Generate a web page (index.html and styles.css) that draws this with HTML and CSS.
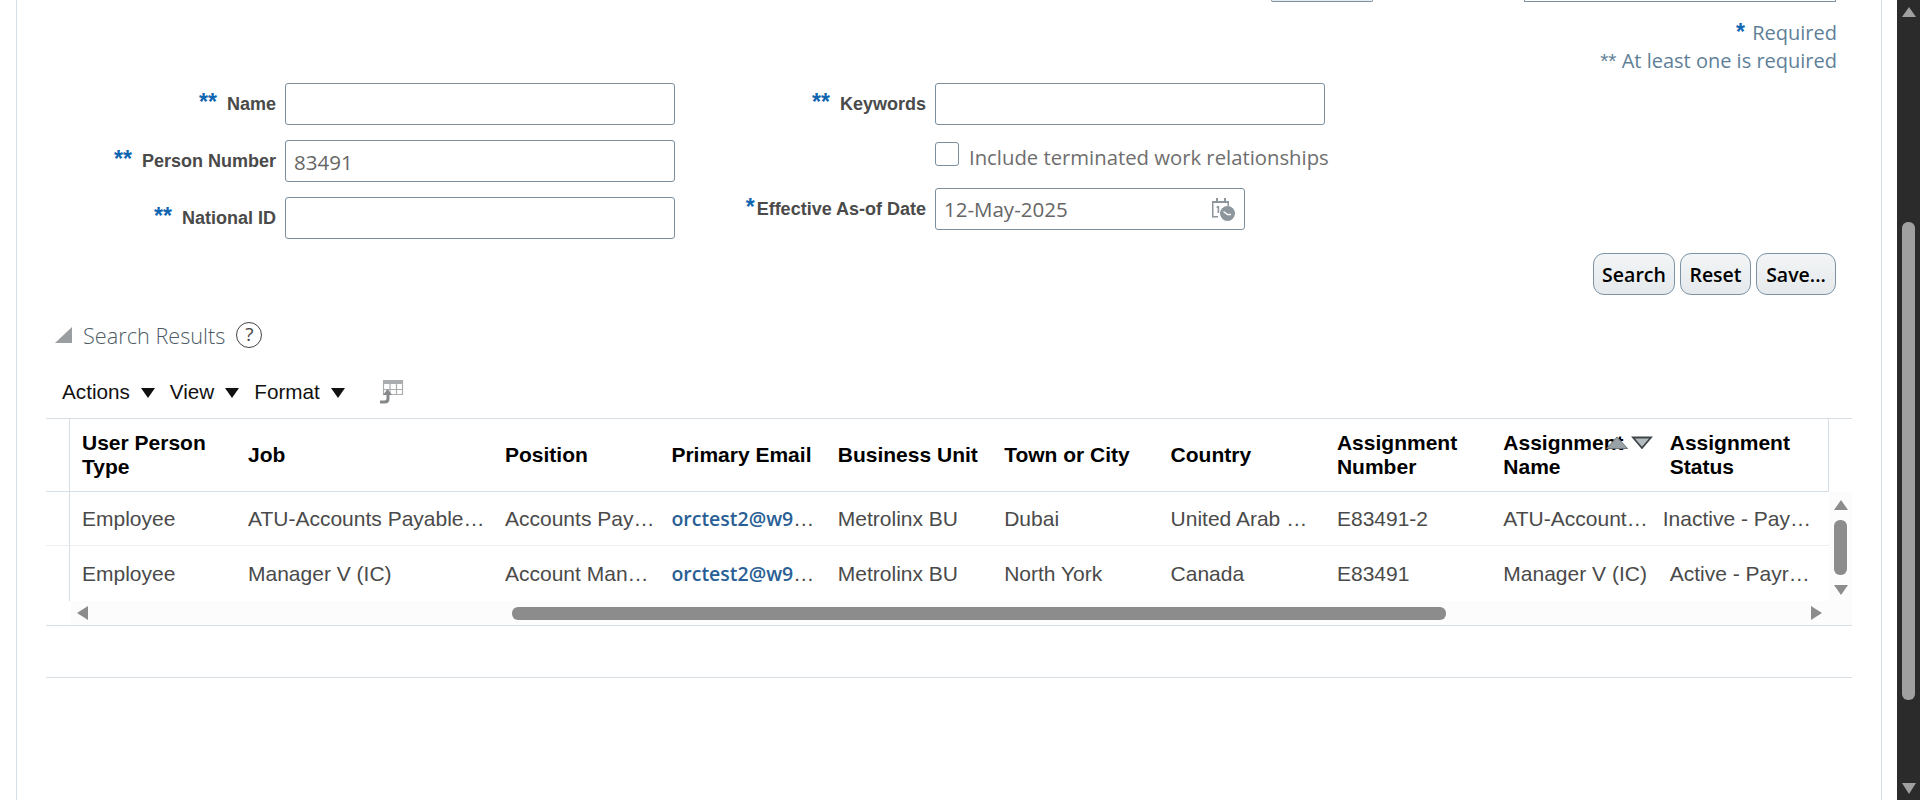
FILE: index.html
```html
<!DOCTYPE html>
<html>
	<head>
		<meta charset="UTF-8">
		<title>Person Management</title>
		<link rel="stylesheet" href="styles.css">
	</head>
	<body>
		<div id="page">
			<div id="panel">
				<!-- cut off controls at the top of the scrolled page -->
				<div class="stubs">
					<div class="stub-btn"></div>
					<div class="stub-input"></div>
				</div>

				<div class="legend">
					<div><span class="star star-req">*</span> Required</div>
					<div><span class="stars-light">**</span> At least one is required</div>
				</div>

				<div class="form">
					<div class="col col-left">
						<div class="field">
							<label><span class="star star-gap">**</span>Name</label>
							<div class="input"></div>
						</div>
						<div class="field">
							<label><span class="star star-gap">**</span>Person Number</label>
							<div class="input">83491</div>
						</div>
						<div class="field">
							<label><span class="star star-gap">**</span>National ID</label>
							<div class="input"></div>
						</div>
					</div>
					<div class="col col-right">
						<div class="field">
							<label><span class="star star-gap">**</span>Keywords</label>
							<div class="input"></div>
						</div>
						<div class="check-row">
							<span class="check"></span>
							<span class="check-text">Include terminated work relationships</span>
						</div>
						<div class="field">
							<label><span class="star star-raised">*</span>Effective As-of Date</label>
							<div class="input input-date">
								<span>12-May-2025</span>
								<svg width="24" height="24" viewBox="0 0 24 24">
									<path d="M1 4h4V1h2v3h6V1h2v3h3v5h-1.500V6H2.500v13H7v1.500H1z" fill="#8c969c"/>
									<path d="M6 9h2.200v7H6.600v-5.200H5.200z" fill="#8c969c"/>
									<circle cx="16.500" cy="16.500" r="7.500" fill="#8c969c"/>
									<path d="M12.500 14.500l4 3h3.500" fill="none" stroke="#fff" stroke-width="1.300"/>
								</svg>
							</div>
						</div>
					</div>
				</div>

				<div class="actions-row">
					<button class="btn btn-search">Search</button>
					<button class="btn btn-reset">Reset</button>
					<button class="btn btn-save">Save...</button>
				</div>

				<div class="section-head">
					<svg class="disclose" width="17" height="16" viewBox="0 0 17 16"><path d="M17 0v16H0z" fill="#9a9ea1"/></svg>
					<h2>Search Results</h2>
					<span class="help">?</span>
				</div>

				<div class="toolbar">
					<span class="menu">Actions<i class="caret"></i></span>
					<span class="menu">View<i class="caret"></i></span>
					<span class="menu">Format<i class="caret"></i></span>
					<svg class="export" width="24" height="24" viewBox="0 0 24 24">
						<path d="M3 0h20v4H3z" fill="#a9adb0"/>
						<path d="M3.500 0v15M10 0v15M16.500 0v15M22.500 0v15M3 9.500h20M3 14.500h20" fill="none" stroke="#a9adb0" stroke-width="1.200"/>
						<path d="M7.500 9l4.500 6H9.500v3.500Q9.500 23.500 5 23.500H0v-3h4.500q2 0 2-2V15H3z" fill="#85898c"/>
					</svg>
				</div>

				<div class="results">
					<div class="grid-area">
						<div class="grid">
							<div class="row row-head">
								<div class="gutter"></div>
								<div class="cell first">User Person Type</div>
								<div class="cell">Job</div>
								<div class="cell">Position</div>
								<div class="cell">Primary Email</div>
								<div class="cell">Business Unit</div>
								<div class="cell">Town or City</div>
								<div class="cell">Country</div>
								<div class="cell">Assignment Number</div>
								<div class="cell sorted">
									Assignment Name
									<span class="sort">
										<svg width="22" height="13" viewBox="0 0 22 13"><path d="M11 1l10.500 11.500H.5z" fill="#98a1a6" stroke="#6a7378"/></svg>
										<svg width="22" height="13" viewBox="0 0 22 13"><path d="M2 1.500h18L11 12z" fill="#b4bbbf" stroke="#3f4549" stroke-width="1.800"/></svg>
									</span>
								</div>
								<div class="cell">Assignment Status</div>
							</div>
							<div class="row row-data">
								<div class="gutter"></div>
								<div class="cell first">Employee</div>
								<div class="cell">ATU-Accounts Payable Manager</div>
								<div class="cell cell-pos">Accounts Payable</div>
								<div class="cell"><a class="mail">orctest2@w9mail.com</a></div>
								<div class="cell">Metrolinx BU</div>
								<div class="cell">Dubai</div>
								<div class="cell">United Arab Emirates</div>
								<div class="cell">E83491-2</div>
								<div class="cell">ATU-Accounts Payable</div>
								<div class="cell status-long">Inactive - Payroll Eligible</div>
							</div>
							<div class="row row-data row-last">
								<div class="gutter"></div>
								<div class="cell first">Employee</div>
								<div class="cell">Manager V (IC)</div>
								<div class="cell cell-pos">Account Manager</div>
								<div class="cell"><a class="mail">orctest2@w9mail.com</a></div>
								<div class="cell">Metrolinx BU</div>
								<div class="cell">North York</div>
								<div class="cell">Canada</div>
								<div class="cell">E83491</div>
								<div class="cell">Manager V (IC)</div>
								<div class="cell cell-status">Active - Payroll Eligible</div>
							</div>
						</div>
						<div class="vscroll">
							<i class="arr-up"></i>
							<i class="v-thumb"></i>
							<i class="arr-down"></i>
						</div>
					</div>
					<div class="hscroll">
						<i class="arr-left"></i>
						<i class="h-thumb"></i>
						<i class="arr-right"></i>
					</div>
				</div>
				<div class="bottom-line"></div>
			</div>
		</div>
		<div id="pagebar">
			<i class="pb-up"></i>
			<i class="pb-thumb"></i>
			<i class="pb-down"></i>
		</div>
	</body>
</html>
```

FILE: styles.css
```css
*{
	margin: 0;
	padding: 0;
	box-sizing: border-box;
}
html,body{
	height: 800px;
	overflow: hidden;
}
body{
	display: flex;
	background-color: #fff;
	font-family: "Open Sans", "Noto Sans", sans-serif;
}
#page{
	width: 1897px;
	height: 800px;
	padding-left: 16px;
	padding-right: 15px;
}
#panel{
	height: 800px;
	border-left: 1px solid #d6dfe6;
	border-right: 1px solid #d6dfe6;
	padding-left: 29px;
	padding-right: 29px;
}

/* top stubs */
.stubs{
	display: flex;
	height: 2px;
}
.stub-btn{
	width: 102px;
	margin-left: 1225px;
	border: 1px solid #7d93a5;
	border-top: none;
	border-radius: 0 0 5px 5px;
	background-color: #e8ecef;
}
.stub-input{
	width: 312px;
	margin-left: 151px;
	border-bottom: 1px solid #7b8f9e;
	border-left: 1px solid #7b8f9e;
	border-right: 1px solid #7b8f9e;
}

/* required legend */
.legend{
	height: 81px;
	padding-top: 17px;
	padding-right: 15px;
	text-align: right;
	font-size: 20px;
	line-height: 28px;
	color: #5f7f98;
}
.star{
	color: #0f65b0;
	font-family: "Liberation Sans", sans-serif;
	font-weight: bold;
	font-size: 23px;
	line-height: 20px;
}
.star-req{
	margin-right: 2px;
}
.stars-light{
	font-family: "Liberation Sans", sans-serif;
	font-size: 21px;
}

/* form */
.form{
	display: flex;
	height: 147px;
}
.col-left{
	width: 649px;
}
.col-right{
	width: 650px;
}
.col-left .field{
	margin-bottom: 15px;
}
.field{
	display: flex;
	align-items: center;
	height: 42px;
}
.field label{
	flex: 0 0 239px;
	padding-right: 9px;
	text-align: right;
	font-family: "Liberation Sans", sans-serif;
	font-weight: bold;
	font-size: 18px;
	line-height: 42px;
	color: #4a4a4a;
	white-space: nowrap;
}
.col-right .field label{
	flex: 0 0 240px;
}
.star-gap{
	margin-right: 10px;
}
.star-raised{
	margin-right: 2px;
}
.input{
	width: 390px;
	height: 42px;
	border: 1px solid #7b8f9e;
	border-radius: 3px;
	padding: 3px 8px 0;
	background-color: #fff;
	font-size: 20.500px;
	line-height: 36px;
	color: #666;
}
.input-date{
	width: 310px;
	display: flex;
	justify-content: space-between;
	align-items: center;
	padding: 1px 9px 1px 8px;
}
.check-row{
	display: flex;
	align-items: center;
	height: 24px;
	margin-top: 17px;
	margin-bottom: 22px;
	padding-left: 240px;
}
.check{
	width: 24px;
	height: 24px;
	border: 1px solid #7b8f9e;
	border-radius: 3px;
}
.check-text{
	margin-left: 10px;
	padding-top: 5px;
	font-size: 20.300px;
	color: #6e6e6e;
	white-space: nowrap;
}

/* search buttons */
.actions-row{
	display: flex;
	justify-content: flex-end;
	gap: 5px;
	height: 42px;
	margin-top: 23px;
	padding-right: 16px;
}
.btn{
	height: 42px;
	border: 1px solid #7d93a5;
	border-radius: 11px;
	background: linear-gradient(#f3f5f6, #e5e9ec);
	font-family: "Open Sans", sans-serif;
	font-weight: 600;
	font-size: 19.500px;
	color: #000;
}
.btn-search{
	width: 82px;
}
.btn-reset{
	width: 71px;
}
.btn-save{
	width: 80px;
}

/* section header */
.section-head{
	display: flex;
	align-items: center;
	height: 28px;
	margin-top: 26px;
	padding-left: 9px;
}
.section-head h2{
	margin-left: 11px;
	font-size: 21.700px;
	font-weight: 300;
	color: #4c5b65;
	white-space: nowrap;
}
.help{
	width: 26px;
	height: 26px;
	margin-left: 11px;
	border: 1.500px solid #444;
	border-radius: 50%;
	text-align: center;
	font-size: 19px;
	line-height: 23px;
	color: #444;
}

/* toolbar */
.toolbar{
	display: flex;
	align-items: center;
	height: 28px;
	margin-top: 29px;
	padding-left: 16px;
	font-family: "Liberation Sans", sans-serif;
	font-size: 20.700px;
	color: #111;
}
.menu{
	display: flex;
	align-items: center;
	margin-right: 15px;
}
.caret{
	width: 0;
	height: 0;
	margin-left: 11px;
	margin-top: 2px;
	border-left: 7px solid transparent;
	border-right: 7px solid transparent;
	border-top: 10px solid #111;
}
.export{
	margin-left: 20px;
}

/* results table */
.results{
	margin-top: 12px;
	border-top: 1px solid #d6dfe6;
	border-bottom: 1px solid #d6dfe6;
	height: 208px;
}
.grid-area{
	display: flex;
	height: 182px;
}
.grid{
	width: 1783px;
}
.row{
	display: grid;
	grid-template-columns: 24px 169px 257px repeat(8, 166.400px);
	font-family: "Liberation Sans", sans-serif;
	font-size: 21px;
}
.gutter{
	border-right: 1px solid #d6dfe6;
}
.cell{
	padding-left: 9px;
	padding-right: 8px;
	white-space: nowrap;
	overflow: hidden;
	text-overflow: ellipsis;
}
.cell.first{
	padding-left: 12px;
}
.row-head{
	height: 73px;
	border-right: 1px solid #d6dfe6;
	border-bottom: 1px solid #d6dfe6;
	align-items: center;
	font-weight: bold;
	line-height: 24px;
	color: #000;
}
.row-head .gutter,.row-data .gutter{
	align-self: stretch;
}
.row-head .cell{
	white-space: normal;
	overflow: visible;
	padding-right: 6px;
}
.row-data{
	height: 54px;
	border-bottom: 1px solid #eceff1;
	align-items: center;
	line-height: 24px;
	color: #4a4a4a;
}
.row-last{
	height: 55px;
	border-bottom: none;
}
.row-head .sorted{
	position: relative;
}
.sort{
	position: absolute;
	top: 5px;
	left: 112px;
	display: flex;
	gap: 3px;
}
.cell-pos{
	padding-right: 4px;
}
.cell-status{
	padding-right: 17px;
}
.status-long{
	padding-left: 2px;
	padding-right: 13px;
}
.mail{
	font-family: "Open Sans", sans-serif;
	font-weight: 600;
	font-size: 19.500px;
	color: #2a5f96;
}

/* inner scrollbars */
.vscroll{
	flex: 1;
	display: flex;
	flex-direction: column;
	align-items: center;
	margin-top: 73px;
	padding-top: 8px;
	background-color: #fcfcfc;
}
.v-thumb{
	width: 13px;
	height: 55px;
	margin: 10px 0;
	border-radius: 6px;
	background-color: #8c8c8c;
}
.arr-up{
	border-left: 7.500px solid transparent;
	border-right: 7.500px solid transparent;
	border-bottom: 10px solid #8c8c8c;
}
.arr-down{
	border-left: 7.500px solid transparent;
	border-right: 7.500px solid transparent;
	border-top: 10px solid #8c8c8c;
}
.hscroll{
	display: flex;
	align-items: center;
	height: 24px;
	margin-left: 25px;
	padding-left: 6px;
	background-color: #fcfcfc;
}
.h-thumb{
	width: 934px;
	height: 13px;
	margin-left: 424px;
	border-radius: 6px;
	background-color: #8c8c8c;
}
.arr-left{
	border-top: 7px solid transparent;
	border-bottom: 7px solid transparent;
	border-right: 11px solid #8c8c8c;
}
.arr-right{
	margin-left: 365px;
	border-top: 7px solid transparent;
	border-bottom: 7px solid transparent;
	border-left: 11px solid #8c8c8c;
}
.bottom-line{
	margin-top: 51px;
	border-top: 1px solid #d6dfe6;
}

/* browser scrollbar */
#pagebar{
	width: 23px;
	height: 800px;
	display: flex;
	flex-direction: column;
	align-items: center;
	padding-top: 7px;
	background-color: #2b2b2b;
}
.pb-up{
	border-left: 7px solid transparent;
	border-right: 7px solid transparent;
	border-bottom: 10px solid #a0a0a0;
}
.pb-thumb{
	width: 13px;
	height: 478px;
	margin-top: 205px;
	border-radius: 6px;
	background-color: #a0a0a0;
}
.pb-down{
	margin-top: 83px;
	border-left: 7px solid transparent;
	border-right: 7px solid transparent;
	border-top: 11px solid #a0a0a0;
}
```
